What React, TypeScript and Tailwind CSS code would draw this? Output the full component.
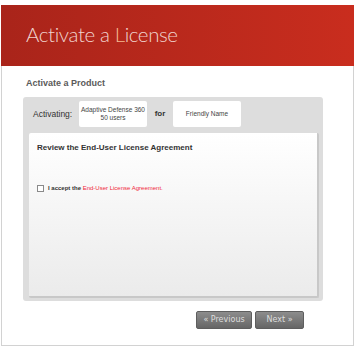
import React from "react";

const App: React.FC = () => {
  return (
    <div className="w-[358px] h-[350px] bg-white pt-[5px] pl-[1px] font-['Liberation_Sans',Arial,sans-serif]">
      <div className="w-[353px] h-[341px] border-x border-b border-[#d2d2d2] flex flex-col">
        {/* header */}
        <div className="h-[61px] -mx-px bg-gradient-to-r from-[#a9241a] to-[#c92d1e] flex items-center pl-[25px] pb-[3px]">
          <h1 className="font-['Lato',sans-serif] font-light text-[20.5px] tracking-[-0.4px] text-[#f0d3ce]">
            Activate a <span className="text-[#f4b98f]">L</span>icense
          </h1>
        </div>

        <div className="pl-[21px] pt-[11px]">
          <h2 className="text-[9px] leading-[12px] font-bold text-[#5a5a5a] pl-[3px]">Activate a Product</h2>

          <div className="mt-[8px] w-[300px] rounded-[3px] bg-[#dddddd] pt-[4px] pl-[6px] pr-[4px] pb-[3px]">
            <div className="flex items-center h-[26px]">
              <span className="text-[8.5px] text-[#333] w-[50px] pl-[4px]">Activating:</span>
              <div className="w-[68px] h-[26px] bg-white rounded-[2px] flex flex-col items-center justify-center text-[6.5px] leading-[8px] text-[#444]">
                <span>Adaptive Defense 360</span>
                <span>50 users</span>
              </div>
              <span className="w-[26px] text-center text-[8px] font-bold text-[#333]">for</span>
              <div className="w-[68px] h-[26px] bg-white rounded-[2px] flex items-center justify-center text-[6.5px] text-[#444]">
                Friendly Name
              </div>
            </div>

            <div className="mt-[6px] h-[165px] rounded-[2px] bg-gradient-to-b from-white to-[#ebebeb] border-r-2 border-b-2 border-[#c8c8c8] pl-[8px] pt-[9px]">
              <div className="text-[8px] font-bold text-[#333]">Review the End-User License Agreement</div>
              <div className="mt-[30px] flex items-center gap-[4px]">
                <span className="w-[7px] h-[7px] border border-[#8a8a8a] bg-white" />
                <span className="text-[6px] font-bold text-[#333]">
                  I accept the <span className="font-normal text-[#f0283a]">End-User License Agreement.</span>
                </span>
              </div>
            </div>
          </div>

          <div className="w-[281px] mt-[10px] flex justify-end gap-[3px]">
            <button className="w-[56px] h-[18px] rounded-[2px] border border-[#5e5e5e] bg-gradient-to-b from-[#8d8d8d] to-[#666] font-['DejaVu_Sans',sans-serif] text-[8px] text-[#ddd]">
              « Previous
            </button>
            <button className="w-[49px] h-[18px] rounded-[2px] border border-[#5e5e5e] bg-gradient-to-b from-[#8d8d8d] to-[#666] font-['DejaVu_Sans',sans-serif] text-[8px] text-[#ddd]">
              Next »
            </button>
          </div>
        </div>
      </div>
    </div>
  );
};

export default App;
